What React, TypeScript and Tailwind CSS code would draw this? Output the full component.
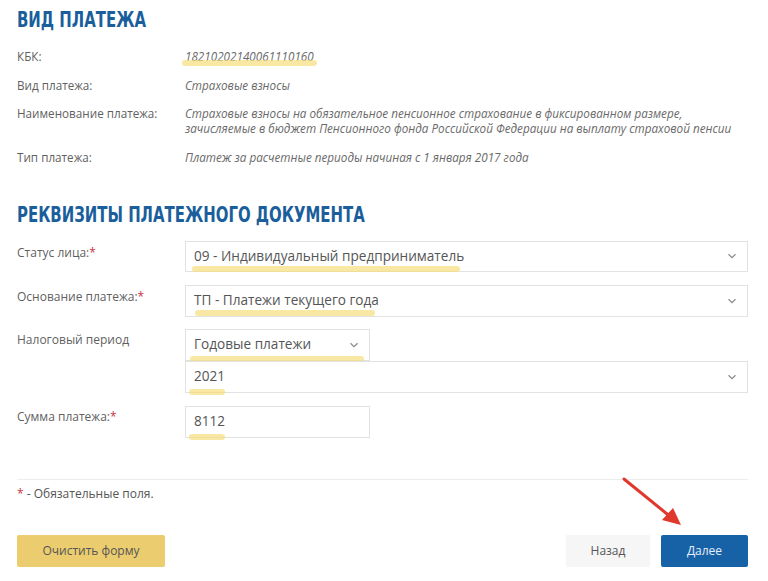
import React from "react";

const headingFont = {
  fontFamily: '"DejaVu Sans Condensed", "DejaVu Sans", sans-serif',
};

const Chevron = () => (
  <svg width="10" height="6" viewBox="0 0 10 6" className="shrink-0">
    <path d="M1.5 1.2 L5 4.6 L8.5 1.2" fill="none" stroke="#8a8a8a" strokeWidth="1.2" />
  </svg>
);

const Highlight: React.FC<{ className: string }> = ({ className }) => (
  <span className={`absolute h-[6px] rounded-full bg-[#f7de7c]/70 ${className}`} />
);

const InfoRow: React.FC<{ label: string; children: React.ReactNode }> = ({ label, children }) => (
  <div className="grid grid-cols-[168px_1fr] items-start">
    <span className="text-[11.7px] leading-[15px] text-[#5f5f5f]">{label}</span>
    <div className="whitespace-nowrap text-[11.7px] leading-[15px] italic text-[#6a6a6a]">{children}</div>
  </div>
);

const Req = () => <span className="text-[#c8343f]">*</span>;

const Heading: React.FC<{ children: React.ReactNode; className?: string }> = ({ children, className }) => (
  <h2
    className={`origin-left scale-x-[0.79] whitespace-nowrap text-[21px] font-bold text-[#1a5e9c] leading-[26px] ${className ?? ""}`}
    style={headingFont}
  >
    {children}
  </h2>
);

const App: React.FC = () => {
  return (
    <div
      className="relative w-[768px] h-[581px] bg-white overflow-hidden"
      style={{ fontFamily: '"Open Sans", "Noto Sans", sans-serif' }}
    >
      <div className="flex flex-col pl-[17px] pr-[20px] pt-[7px]">
        <Heading>ВИД ПЛАТЕЖА</Heading>

        <div className="flex flex-col mt-[16px] gap-[13.5px]">
          <InfoRow label="КБК:">
            <span className="relative">
              18210202140061110160
              <Highlight className="left-[-3px] w-[135px] top-[12px]" />
            </span>
          </InfoRow>
          <InfoRow label="Вид платежа:">Страховые взносы</InfoRow>
          <InfoRow label="Наименование платежа:">
            Страховые взносы на обязательное пенсионное страхование в фиксированном размере,
            <br />
            зачисляемые в бюджет Пенсионного фонда Российской Федерации на выплату страховой пенсии
          </InfoRow>
          <InfoRow label="Тип платежа:">
            Платеж за расчетные периоды начиная с 1 января 2017 года
          </InfoRow>
        </div>

        <Heading className="mt-[37px]">РЕКВИЗИТЫ ПЛАТЕЖНОГО ДОКУМЕНТА</Heading>

        <div className="flex flex-col mt-[13px]">
          <div className="grid grid-cols-[168px_1fr] items-start">
            <span className="pt-[3px] text-[12px] text-[#5f5f5f]">
              Статус лица:<Req />
            </span>
            <div className="relative flex h-[31px] items-center justify-between border border-[#e2e2e2] px-[8px] pr-[10px] text-[13.6px] text-[#555]">
              <span>09 - Индивидуальный предприниматель</span>
              <Chevron />
              <Highlight className="left-[6px] w-[268px] top-[24px]" />
            </div>
          </div>

          <div className="grid grid-cols-[168px_1fr] items-start mt-[13px]">
            <span className="pt-[3px] text-[12px] text-[#5f5f5f]">
              Основание платежа:<Req />
            </span>
            <div className="relative flex h-[32px] items-center justify-between border border-[#e2e2e2] px-[8px] pr-[10px] text-[13.6px] text-[#555]">
              <span>ТП - Платежи текущего года</span>
              <Chevron />
              <Highlight className="left-[9px] w-[180px] top-[24px]" />
            </div>
          </div>

          <div className="grid grid-cols-[168px_1fr] items-start mt-[12px]">
            <span className="pt-[2px] text-[12px] text-[#5f5f5f]">Налоговый период</span>
            <div className="flex flex-col">
              <div className="relative flex h-[32px] w-[185px] items-center justify-between border border-[#e2e2e2] px-[8px] pr-[10px] text-[13.6px] text-[#555]">
                <span>Годовые платежи</span>
                <Chevron />
                <Highlight className="left-[4px] w-[174px] top-[26px]" />
              </div>
              <div className="relative flex h-[32px] items-center justify-between border border-[#e2e2e2] px-[8px] pr-[10px] text-[13.6px] text-[#555]">
                <span>2021</span>
                <Chevron />
                <Highlight className="left-[3px] w-[36px] top-[27px]" />
              </div>
            </div>
          </div>

          <div className="grid grid-cols-[168px_1fr] items-start mt-[13px]">
            <span className="pt-[2px] text-[12px] text-[#5f5f5f]">
              Сумма платежа:<Req />
            </span>
            <div className="relative flex h-[32px] w-[185px] items-center border border-[#e2e2e2] px-[8px] text-[13.6px] text-[#555]">
              <span>8112</span>
              <Highlight className="left-[3px] w-[36px] top-[27px]" />
            </div>
          </div>
        </div>

        <div className="mt-[41px] h-px w-[731px] bg-[#ededed]" />

        <p className="mt-[5px] text-[12px] text-[#555]">
          <Req /> - Обязательные поля.
        </p>

        <div className="mt-[32px] flex w-[731px] items-center justify-between">
          <button className="h-[32px] w-[148px] rounded-[2px] bg-[#ebcd70] text-[12px] text-[#555]">
            Очистить форму
          </button>
          <div className="flex gap-[11px]">
            <button className="h-[32px] w-[84px] bg-[#f6f6f6] text-[12px] text-[#555]">Назад</button>
            <button className="h-[32px] w-[87px] rounded-[2px] bg-[#1761a6] text-[12px] text-[#e8f1fb]">
              Далее
            </button>
          </div>
        </div>
      </div>

      <svg className="absolute left-0 top-0 pointer-events-none" width="768" height="581">
        <line x1="624" y1="479" x2="672" y2="518" stroke="#e0382b" strokeWidth="3" strokeLinecap="round" />
        <polygon points="681,525 662,520 673,508" fill="#e0382b" />
      </svg>
    </div>
  );
};

export default App;
